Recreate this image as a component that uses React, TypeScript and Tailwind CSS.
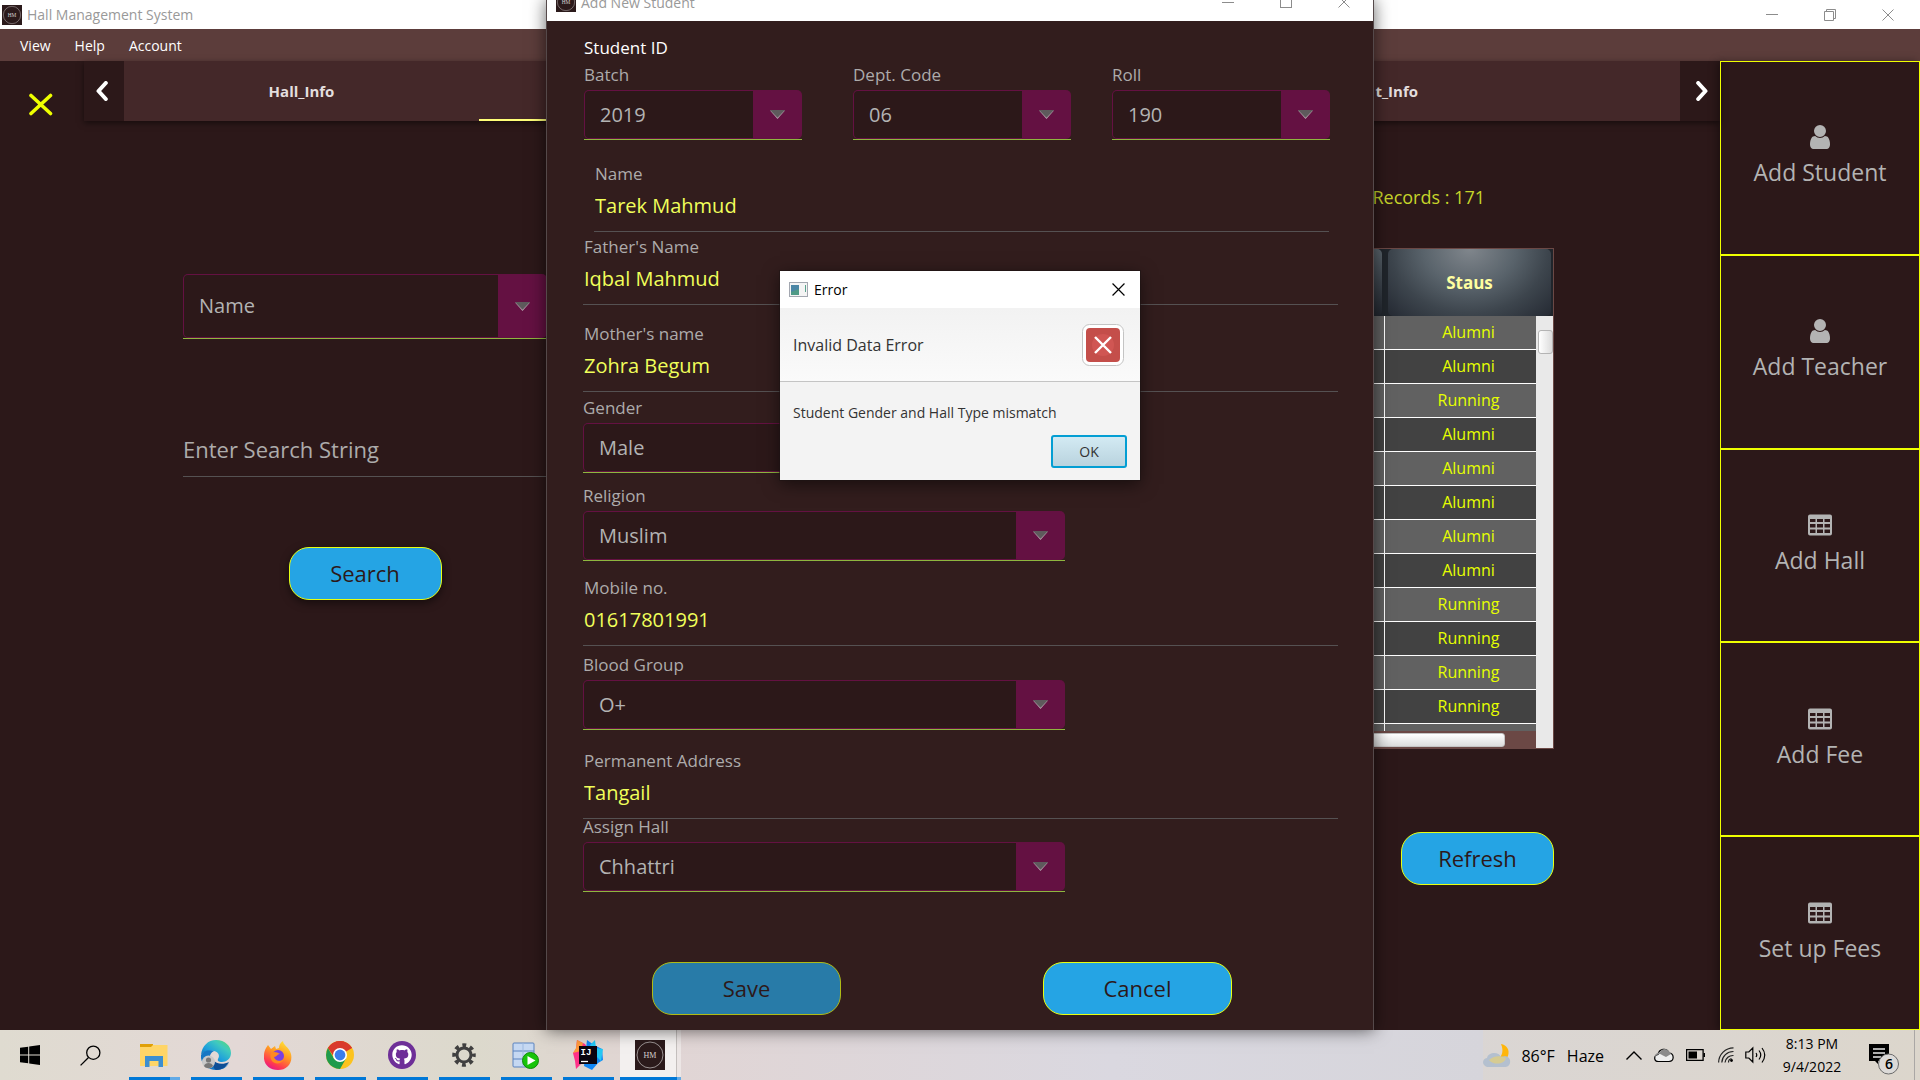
import type { ReactNode } from "react";
import { FaGithub } from "react-icons/fa";

/* ---------- shared icons ---------- */

function HallLogo({ className }: { className: string }) {
  return (
    <svg viewBox="0 0 30 30" className={className} aria-hidden="true">
      <rect width="30" height="30" fill="#2b1a1b" />
      <circle cx="15" cy="15" r="13" fill="none" stroke="#b5aeae" strokeWidth="0.8" />
      <text x="15" y="18" fontSize="8" textAnchor="middle" fill="#d6d0d0" fontFamily="Liberation Serif, serif">
        HM
      </text>
    </svg>
  );
}

function CrossIcon({ className, width = 1 }: { className: string; width?: number }) {
  return (
    <svg viewBox="0 0 12 12" className={className} aria-hidden="true">
      <path d="M.5 .5l11 11M11.5 .5l-11 11" stroke="currentColor" strokeWidth={width} fill="none" />
    </svg>
  );
}

function UserIcon() {
  return (
    <svg viewBox="256 128 1280 1536" className="h-6 w-5" fill="#b3b3b3" aria-hidden="true">
      <path d="M1536 1399q0 109-62.5 187t-150.5 78h-854q-88 0-150.5-78t-62.5-187q0-85 8.5-160.5t31.5-152 58.5-131 94-89 134.5-34.5q131 128 313 128t313-128q76 0 134.5 34.5t94 89 58.5 131 31.5 152 8.5 160.5zm-256-887q0 159-112.5 271.5t-271.5 112.5-271.5-112.5-112.5-271.5 112.5-271.5 271.5-112.5 271.5 112.5 112.5 271.5z" />
    </svg>
  );
}

function TableIcon() {
  return (
    <svg viewBox="0 0 24 21" className="h-6 w-6" aria-hidden="true">
      <path
        fillRule="evenodd"
        fill="#b3b3b3"
        d="M2 0h20a2 2 0 0 1 2 2v17a2 2 0 0 1-2 2H2a2 2 0 0 1-2-2V2a2 2 0 0 1 2-2zM2 4.500v3h5.500v-3zM9 4.500v3h6v-3zM16.500 4.500v3H22v-3zM2 9.500v3.500h5.500V9.500zM9 9.500v3.500h6V9.500zM16.500 9.500v3.500H22V9.500zM2 15v3.500h5.500V15zM9 15v3.500h6V15zM16.500 15v3.500H22V15z"
      />
    </svg>
  );
}

function Chevron({ flip = false }: { flip?: boolean }) {
  return (
    <svg viewBox="0 0 12 20" className={flip ? "h-5 w-3 rotate-180" : "h-5 w-3"} aria-hidden="true">
      <path d="M9.800 2L2.500 10l7.300 8" stroke="#fff" strokeWidth="4" strokeLinecap="round" strokeLinejoin="round" fill="none" />
    </svg>
  );
}

/* ---------- form controls ---------- */

function Combo({ id, value, label, className }: { id: string; value: string; label?: string; className: string }) {
  return (
    <div className={`flex border-b border-[#8fb63f] ${className}`}>
      <div className="flex flex-1 rounded-[5px] bg-[#641142] p-px">
        <select
          id={id}
          aria-label={label}
          defaultValue={value}
          className="min-w-0 flex-1 appearance-none rounded-l-[4px] bg-[#2c1819] pl-[15px] text-[20px] text-[#b3b3b3] outline-none"
        >
          <option>{value}</option>
        </select>
        <span className="pointer-events-none flex w-[48px] items-center justify-center">
          <svg viewBox="0 0 15 9" className="h-[9px] w-[15px]" aria-hidden="true">
            <path d="M0 .5h15L7.500 9z" fill="#b9a5b0" />
            <path d="M0 0h15L7.500 7.800z" fill="#5e5a5c" />
          </svg>
        </span>
      </div>
    </div>
  );
}

function SelectField({ id, label, value, width, className }: { id: string; label: string; value: string; width: string; className?: string }) {
  return (
    <div className={`flex flex-col gap-[3px] ${width} ${className ?? ""}`}>
      <label htmlFor={id} className="text-[17px] leading-6 text-[#adabab]">
        {label}
      </label>
      <Combo id={id} value={value} className="h-[50px]" />
    </div>
  );
}

function TextField({ id, label, value, className }: { id: string; label: string; value: string; className: string }) {
  return (
    <div className={`flex flex-col ${className}`}>
      <label htmlFor={id} className="pl-px text-[17px] leading-6 text-[#adabab]">
        {label}
      </label>
      <input
        id={id}
        defaultValue={value}
        className="h-[46px] border-b border-[#555152] bg-transparent pb-[6px] pl-px text-[20px] text-[#f0ff5a] outline-none"
      />
    </div>
  );
}

function PillButton({ children, className }: { children: ReactNode; className: string }) {
  return (
    <button
      type="button"
      className={`h-[53px] rounded-[20px] border border-[#e6ff14] bg-[#25a4e4] pb-px text-[22px] text-[#2c1819] ${className}`}
    >
      {children}
    </button>
  );
}

/* ---------- main window ---------- */

const statuses = [
  "Alumni", "Alumni", "Running", "Alumni", "Alumni", "Alumni",
  "Alumni", "Alumni", "Running", "Running", "Running", "Running",
];

function StatusTable() {
  return (
    <div className="border border-[#6b4845]">
      <table className="w-full table-fixed border-separate border-spacing-0">
        <colgroup>
          <col />
          <col className="w-[151px]" />
          <col className="w-[17px]" />
        </colgroup>
        <thead>
          <tr className="h-[67px] bg-[#20252b]">
            <th className="p-0 pr-[3px]">
              <div className="h-[67px] rounded-[5px] bg-linear-to-b from-[#5a646c] to-[#22272f]" />
            </th>
            <th colSpan={2} className="p-0 pl-[3px] pr-[2px]">
              <div className="flex h-[67px] items-center justify-center rounded-[5px] bg-[radial-gradient(ellipse_at_50%_0%,#80868c_0%,#59636b_40%,#3d454d_68%,#252a33_100%)] text-[17px] font-bold text-[#ffffa0]">
                Staus
              </div>
            </th>
          </tr>
        </thead>
        <tbody>
          {statuses.map((status, i) => (
            <tr key={i} className={i % 2 === 0 ? "h-[34px] bg-[#616161]" : "h-[34px] bg-[#424242]"}>
              <td className="border-r border-b border-white p-0" />
              <td className="border-b border-white p-0 pb-[2px] pl-4 text-center text-[16px] leading-6 text-[#e6ff00]">
                {status}
              </td>
              {i === 0 && (
                <td rowSpan={14} className="bg-[#e9e9e9] p-0 align-top">
                  <div className="ml-[2px] mt-[14px] h-6 rounded-[3px] border border-[#b4b4b4] bg-linear-to-r from-white to-[#dcdcdc]" />
                </td>
              )}
            </tr>
          ))}
          <tr className="h-[7px] bg-[#616161]">
            <td className="border-r border-white p-0" />
            <td className="p-0" />
          </tr>
          <tr className="h-[17px] bg-[#6b4845]">
            <td colSpan={2} className="p-0">
              <div className="mr-[31px] h-[14px] rounded-[3px] border border-[#c4c4c4] bg-linear-to-b from-white to-[#dcdcdc]" />
            </td>
          </tr>
        </tbody>
      </table>
    </div>
  );
}

const actions = [
  { label: "Add Student", icon: "user" },
  { label: "Add Teacher", icon: "user" },
  { label: "Add Hall", icon: "table" },
  { label: "Add Fee", icon: "table" },
  { label: "Set up Fees", icon: "table" },
];

function MainWindow() {
  return (
    <div className="flex flex-1 flex-col">
      <header className="flex h-[29px] items-center bg-white">
        <HallLogo className="ml-[2px] h-5 w-5" />
        <span className="ml-[5px] flex-1 text-[14px] text-[#999]">Hall Management System</span>
        <div className="flex items-center gap-[46px] pr-[26px] text-[#8c8c8c]">
          <button type="button" aria-label="Minimize" className="flex h-3 w-3 items-center">
            <span className="h-px w-3 bg-[#8c8c8c]" />
          </button>
          <button type="button" aria-label="Restore">
            <svg viewBox="0 0 12 12" className="h-3 w-3" fill="none" stroke="currentColor" aria-hidden="true">
              <path d="M.5 2.500h9v9h-9zM2.500 2.500v-2h9v9h-2" />
            </svg>
          </button>
          <button type="button" aria-label="Close">
            <CrossIcon className="h-3 w-3" />
          </button>
        </div>
      </header>
      <nav className="flex h-8 items-center gap-6 bg-[#5c3d3b] pl-5 text-[14px] text-white">
        <button type="button">View</button>
        <button type="button">Help</button>
        <button type="button">Account</button>
      </nav>
      <div className="flex flex-1 bg-[#2c1819]">
        <div className="w-[84px] pt-8 pl-[28px]">
          <button type="button" aria-label="Close menu" className="block">
            <svg viewBox="0 0 26 24" className="h-6 w-[26px]" aria-hidden="true">
              <path d="M3 2.500l19.500 18M22.500 2.500L3 20.500" stroke="#efff00" strokeWidth="3.600" strokeLinecap="round" />
            </svg>
          </button>
        </div>
        <main className="flex min-w-0 flex-1 flex-col">
          <div className="flex h-[60px] shadow-[0_2px_6px_rgba(0,0,0,0.5)]">
            <button type="button" aria-label="Previous tab" className="flex w-10 items-center pl-3">
              <Chevron />
            </button>
            <div className="flex flex-1 bg-[#442829] text-[15px] font-bold text-[#e3dede]">
              <button type="button" className="w-[355px]">
                Hall_Info
              </button>
              <button type="button" aria-label="Current tab" className="w-[355px] border-b-2 border-[#ffff78]" />
              <span className="flex-1" />
              <button type="button" className="w-[308px] pr-[262px] text-right">
                t_Info
              </button>
            </div>
            <button type="button" aria-label="Next tab" className="flex w-10 items-center pl-4">
              <Chevron flip />
            </button>
          </div>
          <div className="flex flex-1 justify-between pr-[166px] pl-[99px]">
            <form className="flex w-[364px] flex-col pt-[153px]">
              <Combo id="search-by" value="Name" label="Search by" className="h-[65px]" />
              <input
                aria-label="Enter Search String"
                placeholder="Enter Search String"
                className="mt-[86px] h-[52px] border-b border-[#555152] bg-transparent pb-1 text-[22px] text-white outline-none placeholder:text-[#adabab]"
              />
              <PillButton className="mt-[70px] w-[153px] self-center shadow-[0_3px_8px_rgba(0,0,0,0.5)]">Search</PillButton>
            </form>
            <section className="flex w-[400px] flex-col pt-[64px]">
              <p className="mr-[69px] self-end font-['Comic_Sans_MS','Open_Sans',sans-serif] text-[18px] leading-6 text-[#c6d42a]">Records : 171</p>
              <div className="mt-[39px]">
                <StatusTable />
              </div>
              <PillButton className="mt-[83px] w-[153px] self-end">Refresh</PillButton>
            </section>
          </div>
        </main>
        <aside className="flex w-[200px] flex-col overflow-hidden shadow-[-3px_0_8px_rgba(0,0,0,0.35)]">
          {actions.map((a) => (
            <button
              key={a.label}
              type="button"
              className="flex flex-1 flex-col items-center justify-center gap-[7px] border border-[#efff00] pb-[2px] text-[23px] leading-8 text-[#b3b3b3]"
            >
              {a.icon === "user" ? <UserIcon /> : <TableIcon />}
              {a.label}
            </button>
          ))}
        </aside>
      </div>
    </div>
  );
}

/* ---------- add student window ---------- */

function StudentWindow() {
  return (
    <div className="absolute inset-x-0 top-0 bottom-[50px] mx-auto flex w-[828px] flex-col overflow-hidden border-x border-[#55494a] bg-[#321d1d] shadow-[0_0_16px_rgba(0,0,0,0.6)]">
      <header className="flex h-[21px] items-end bg-white">
        <HallLogo className="mb-[9px] ml-[9px] h-5 w-5 shrink-0" />
        <span className="mb-2 ml-[5px] flex-1 text-[14px] leading-5 text-[#999]">Add New Student</span>
        <div className="mb-[13px] flex items-center gap-[46px] pr-[23px] text-[#8c8c8c]">
          <button type="button" aria-label="Minimize" className="flex h-3 w-3 items-center">
            <span className="h-px w-3 bg-[#8c8c8c]" />
          </button>
          <button type="button" aria-label="Maximize" className="h-3 w-3 border border-[#8c8c8c]" />
          <button type="button" aria-label="Close">
            <CrossIcon className="h-3 w-3" />
          </button>
        </div>
      </header>
      <form className="flex flex-col pt-[15px] pr-[35px] pl-[36px]">
        <h2 className="pl-px text-[17px] leading-6 text-white">Student ID</h2>
        <div className="mt-[3px] flex pl-px">
          <SelectField id="batch" label="Batch" value="2019" width="w-[218px]" />
          <SelectField id="dept" label="Dept. Code" value="06" width="w-[218px]" className="ml-[51px]" />
          <SelectField id="roll" label="Roll" value="190" width="w-[218px]" className="ml-[41px]" />
        </div>
        <TextField id="name" label="Name" value="Tarek Mahmud" className="mt-[22px] mr-[9px] ml-[11px]" />
        <TextField id="father" label="Father's Name" value="Iqbal Mahmud" className="mt-[3px]" />
        <TextField id="mother" label="Mother's name" value="Zohra Begum" className="mt-[17px]" />
        <SelectField id="gender" label="Gender" value="Male" width="w-[482px]" className="mt-1" />
        <SelectField id="religion" label="Religion" value="Muslim" width="w-[482px]" className="mt-[11px]" />
        <TextField id="mobile" label="Mobile no." value="01617801991" className="mt-[15px]" />
        <SelectField id="blood" label="Blood Group" value="O+" width="w-[482px]" className="mt-[7px]" />
        <TextField id="address" label="Permanent Address" value="Tangail" className="mt-[19px]" />
        <SelectField id="hall" label="Assign Hall" value="Chhattri" width="w-[482px]" className="-mt-1" />
        <div className="mt-[70px] flex justify-between pr-[106px] pl-[69px]">
          <PillButton className="w-[189px] opacity-70">Save</PillButton>
          <PillButton className="w-[189px]">Cancel</PillButton>
        </div>
      </form>
    </div>
  );
}

function ErrorDialog() {
  return (
    <div
      role="alertdialog"
      aria-label="Error"
      className="absolute inset-x-0 top-[271px] mx-auto w-[360px] bg-[#f3f3f3] shadow-[0_0_0_1px_rgba(30,20,20,0.6),0_4px_16px_rgba(0,0,0,0.55)]"
    >
      <header className="flex h-[37px] items-center bg-white pr-[15px] pl-[9px]">
        <svg viewBox="0 0 19 16" className="h-4 w-[19px]" aria-hidden="true">
          <rect x=".5" y=".5" width="18" height="14" fill="#f4f4f4" stroke="#a3a7b0" />
          <rect x="2" y="3" width="8" height="10" fill="#4f9a86" />
          <path d="M2 3h8v4l-8 3z" fill="#4b86a5" />
          <path d="M16.500 3v7" stroke="#5aa38d" />
        </svg>
        <span className="ml-[6px] flex-1 text-[14px] text-black">Error</span>
        <button type="button" aria-label="Close dialog" className="text-black">
          <CrossIcon className="h-[13px] w-[13px]" width={1.1} />
        </button>
      </header>
      <div className="flex h-[74px] items-center justify-between border-b border-[#c4c4c4] bg-linear-to-b from-[#f2f2f2] to-[#fafafa] pr-4 pl-[13px]">
        <h3 className="text-[16px] text-[#333]">Invalid Data Error</h3>
        <svg viewBox="0 0 42 42" className="h-[42px] w-[42px]" aria-hidden="true">
          <rect x=".5" y=".5" width="41" height="41" rx="7" fill="#fff" stroke="#c4c4c4" />
          <rect x="4" y="4" width="34" height="34" rx="4" fill="#c44e4a" />
          <circle cx="21" cy="21" r="11" fill="#d05653" />
          <path d="M13 13l16 16M29 13L13 29" stroke="#fff" strokeWidth="2.400" />
        </svg>
      </div>
      <div className="flex flex-col px-[13px] pt-[21px] pb-3">
        <p className="text-[14px] leading-5 text-[#333]">Student Gender and Hall Type mismatch</p>
        <button
          type="button"
          className="mt-[12px] h-[33px] w-[76px] self-end rounded-[3px] border-2 border-[#039ed3] bg-linear-to-b from-[#d3eaf3] to-[#b9d3de] text-[14px] text-[#333]"
        >
          OK
        </button>
      </div>
    </div>
  );
}

/* ---------- taskbar ---------- */

function FolderIcon() {
  return (
    <svg viewBox="0 0 28 24" className="h-6 w-7" aria-hidden="true">
      <path d="M0 1h13v4H0z" fill="#e0a008" />
      <path d="M0 4h11l2-2h14.500v21H0z" fill="#ffd567" />
      <path d="M5 24V13h18v11h-4.500v-6h-9v6z" fill="#3d8fd1" />
    </svg>
  );
}

function EdgeIcon() {
  return (
    <svg viewBox="0 0 30 30" className="h-[30px] w-[30px]" aria-hidden="true">
      <defs>
        <linearGradient id="edge-fill" x1="0" y1="1" x2="1" y2="0">
          <stop offset="0" stopColor="#0b5aa5" />
          <stop offset="0.4" stopColor="#1e9fdc" />
          <stop offset="0.7" stopColor="#3fc9c0" />
          <stop offset="1" stopColor="#5bdc66" />
        </linearGradient>
      </defs>
      <path d="M0 15C1 6 7 0 15 0c9 0 15 6 15 13 0 6-5 9-9 9-3 0-5-1-4-3 2-3 1-7-4-8C8 10 2 12 0 15z" fill="url(#edge-fill)" />
      <path d="M0 15c2-4 8-6 13-4-4 2-5 6-4 10 1 5 7 8 12 7 3-1 5-3 7-5-3 5-7 7-13 7C6 30-1 23 0 15z" fill="#1577c4" />
      <path d="M12 20c3 4 10 5 16 2-3 5-7 8-13 8-3-2-4-6-3-10z" fill="#0d4e96" />
      <circle cx="7.500" cy="22" r="6.500" fill="#c9c9c9" />
      <circle cx="7.500" cy="20" r="2.600" fill="#777" />
      <path d="M3 26c1-4 8-4 9 0-2 3-7 3-9 0z" fill="#777" />
    </svg>
  );
}

function FirefoxIcon() {
  return (
    <svg viewBox="0 0 28 29" className="h-[29px] w-7" aria-hidden="true">
      <defs>
        <linearGradient id="fox" x1="0.8" y1="0" x2="0.3" y2="1">
          <stop offset="0" stopColor="#ffe739" />
          <stop offset="0.45" stopColor="#ff9722" />
          <stop offset="0.8" stopColor="#ff3b4f" />
          <stop offset="1" stopColor="#e6178a" />
        </linearGradient>
      </defs>
      <path d="M2 7l2-3 3 4 4-3 1 3 3-1c0-3 1-5 4-7 0 4 6 6 8 13 2 9-4 16-13 16S-1 23 0 14c0-3 1-5 2-7z" fill="url(#fox)" />
      <circle cx="14" cy="15" r="6" fill="#7a3fe0" />
      <path d="M7 12c3-2 6-1 9 1-3 0-3 3-6 3 1 4 6 5 10 2-2 5-9 6-12 2-2-3-2-6-1-8z" fill="#ff8a20" />
    </svg>
  );
}

function ChromeIcon() {
  return (
    <svg viewBox="0 0 28 28" className="h-7 w-7" aria-hidden="true">
      <circle cx="14" cy="14" r="14" fill="#fcc31e" />
      <path d="M14 14L1.900 7A14 14 0 0 1 26.100 7z" fill="#d93a2d" />
      <path d="M14 7h12.100A14 14 0 0 0 1.900 7l5.500 8z" fill="#d93a2d" />
      <path d="M1.900 7A14 14 0 0 0 14 28l6-10.500-12 0z" fill="#1f9a4c" />
      <circle cx="14" cy="14" r="7" fill="#fff" />
      <circle cx="14" cy="14" r="5.400" fill="#3b7ded" />
    </svg>
  );
}

function GithubIcon() {
  return (
    <span className="flex h-7 w-7 items-center justify-center rounded-full bg-[#6e2f98]">
      <FaGithub className="h-5 w-5 text-white" />
    </span>
  );
}

function GearIcon() {
  return (
    <svg viewBox="0 0 24 24" className="h-6 w-6" aria-hidden="true">
      <circle cx="12" cy="12" r="9.500" fill="none" stroke="#404040" strokeWidth="4.500" strokeDasharray="3.700 3.760" strokeDashoffset="1.850" />
      <circle cx="12" cy="12" r="7" fill="none" stroke="#404040" strokeWidth="3" />
    </svg>
  );
}

function DatabaseIcon() {
  return (
    <svg viewBox="0 0 27 27" className="h-[27px] w-[27px]" aria-hidden="true">
      <rect x="1" y="1" width="21" height="24" rx="1" fill="#c5d8f2" stroke="#5b83bf" />
      <path d="M1 9h21M1 17h21" stroke="#5b83bf" />
      <path d="M11 1v24" stroke="#9db9e0" />
      <circle cx="18.500" cy="18.500" r="8" fill="#17c40a" stroke="#0f8a08" />
      <path d="M15.500 14l8 4.500-8 4.500z" fill="#fff" />
    </svg>
  );
}

function IntellijIcon() {
  return (
    <svg viewBox="0 0 30 30" className="h-[30px] w-[30px]" aria-hidden="true">
      <path d="M4 0l8 4 4 6-8 14-5 5-1-8-2-8 3-4z" fill="#ff3188" />
      <path d="M4 0l6 3-2 8-8 2 3-5z" fill="#ff9a3d" />
      <path d="M14 0l7 5 8 4 1 11-5 3-6 7-8-4z" fill="#1186f5" />
      <path d="M22 0l1 8 7 1-2 12-6-6-5-10z" fill="#23c8f4" />
      <rect x="6" y="6" width="18" height="18" fill="#0b0510" />
      <text x="7.500" y="15" fontSize="9" fontWeight="bold" fill="#fff" fontFamily="Liberation Mono, monospace">
        IJ
      </text>
      <path d="M8 21.500h7" stroke="#fff" strokeWidth="1.300" />
    </svg>
  );
}

const apps = [
  { name: "File Explorer", icon: <FolderIcon />, extra: true },
  { name: "Edge", icon: <EdgeIcon />, extra: false },
  { name: "Firefox", icon: <FirefoxIcon />, extra: false },
  { name: "Chrome", icon: <ChromeIcon />, extra: false },
  { name: "GitHub", icon: <GithubIcon />, extra: false },
  { name: "Settings", icon: <GearIcon />, extra: false },
  { name: "Database", icon: <DatabaseIcon />, extra: false },
  { name: "IntelliJ IDEA", icon: <IntellijIcon />, extra: false },
];

function Taskbar() {
  return (
    <footer className="flex h-[50px] bg-linear-to-r from-[#dedad1] via-[#d8d5dc] to-[#dcd6cc]">
      <div className="flex flex-1 bg-[linear-gradient(90deg,#dfdbd0_0%,#e3d8d6_16%,#dcd9cc_32%,#e1d5d4_44%,#dad8e0_75%,#d6d5db_100%)]">
        <button type="button" aria-label="Start" className="flex w-[60px] items-center justify-center">
          <svg viewBox="0 0 20 20" className="h-5 w-5" aria-hidden="true">
            <path d="M0 2.800L8.200 1.700v7.800H0zM9.200 1.500L20 0v9.500H9.200zM0 10.500h8.200v7.800L0 17.200zM9.200 10.500H20V20L9.200 18.500z" />
          </svg>
        </button>
        <button type="button" aria-label="Search Windows" className="flex w-[60px] items-center justify-center">
          <svg viewBox="0 0 21 21" className="h-[21px] w-[21px]" fill="none" stroke="#000" strokeWidth="1.300" aria-hidden="true">
            <circle cx="13.300" cy="7.700" r="6.600" />
            <path d="M8.500 12.500L.6 20.400" />
          </svg>
        </button>
        {apps.map((app) => (
          <button key={app.name} type="button" aria-label={app.name} className="flex w-[62px] flex-col pl-[9px]">
            <span className="flex w-[49px] flex-1 items-center justify-center pt-[3px]">{app.icon}</span>
            <span className="flex h-[3px]">
              <span className={app.extra ? "w-[41px] bg-[#0078d7]" : "w-[51px] bg-[#0078d7]"} />
              {app.extra && <span className="w-[10px] bg-[#62aae6]" />}
            </span>
          </button>
        ))}
        <button type="button" aria-label="Hall Management System" className="ml-[4px] flex w-[61px] flex-col bg-[#ece6e5]">
          <span className="flex w-[57px] flex-1 items-center justify-center border-r border-[#c4bfbd] bg-[#f3f0ef] pl-[3px] pt-[3px]">
            <HallLogo className="h-[30px] w-[30px]" />
          </span>
          <span className="flex h-[3px]">
            <span className="w-[57px] bg-[#0078d7]" />
            <span className="w-1 bg-[#62aae6]" />
          </span>
        </button>
      </div>
      <div className="flex items-center text-black">
        <button type="button" className="flex items-center pt-[2px] text-[16px]">
          <svg viewBox="0 0 28 26" className="h-[26px] w-7" aria-hidden="true">
            <path d="M18 1c6 1 9 6 7 12-2 4-6 5-10 4 4-4 6-9 3-16z" fill="#ffb60a" />
            <path d="M6 24c-7 0-8-8-2-9 1-6 12-7 14-1 6-2 10 1 9 6-1 4-4 4-6 4z" fill="#b4c0cf" />
            <path d="M6 17c4-4 11-5 17-2-1 6-12 8-17 2z" fill="#d6cb92" />
          </svg>
          <span className="ml-[10px]">86°F</span>
          <span className="ml-[12px]">Haze</span>
        </button>
        <div className="ml-[22px] flex items-center">
          <svg viewBox="0 0 16 9" className="h-[9px] w-4" fill="none" stroke="#000" strokeWidth="1.400" aria-hidden="true">
            <path d="M.5 8.500L8 1l7.500 7.500" />
          </svg>
          <svg viewBox="0 0 20 15" className="ml-[12px] h-[15px] w-5" aria-hidden="true">
            <path d="M4.500 13.500c-5 0-5-6-.5-7C5 1 12.500-1 15 5c5 0 6 8 0 8.500z" fill="#eee" stroke="#000" strokeWidth="1.200" />
            <path d="M1.500 10C2 6 6 5 8 7l4 2 5-3C14 1 9-1 6 4 3 5 0 6 1.500 10z" fill="#8b8b8b" />
          </svg>
          <svg viewBox="0 0 19 12" className="ml-[12px] h-3 w-[19px]" aria-hidden="true">
            <path d="M.6.600h16.500v10.800H.6zM18.500 4v4" fill="none" stroke="#000" strokeWidth="1.300" />
            <path d="M2.500 2.500h8.500v7H2.500z" />
          </svg>
          <svg viewBox="0 0 16 16" className="ml-[13px] h-4 w-4" fill="none" stroke="#222" strokeWidth="1.200" aria-hidden="true">
            <path d="M.6 15.500A15 15 0 0 1 15.500 .8M3.800 15.500A11.500 11.500 0 0 1 15.500 4.500M7 15.500a8 8 0 0 1 8.500-7" />
            <circle cx="13.500" cy="13.500" r="1.400" fill="#000" stroke="none" />
            <path d="M10.500 15.500a4 4 0 0 1 3-4" />
          </svg>
          <svg viewBox="0 0 21 18" className="ml-[11px] h-[18px] w-[21px]" fill="none" stroke="#000" strokeWidth="1.200" aria-hidden="true">
            <path d="M.8 6h3l4-4v14l-4-4h-3zM11 7q1.500 2 0 4M14 4.500q3.500 4.500 0 9M17 2q5.500 7 0 14.500" />
          </svg>
        </div>
        <div className="ml-[15px] flex w-[62px] flex-col text-center text-[14px] leading-[23px]">
          <span>8:13 PM</span>
          <span>9/4/2022</span>
        </div>
        <button type="button" aria-label="Notifications" className="relative ml-[26px] mt-[8px] h-[30px] w-[30px]">
          <svg viewBox="0 0 30 31" className="h-[31px] w-[30px]" aria-hidden="true">
            <path d="M0 0h20v17H9v3l-3-3H0z" />
            <path d="M4 5h12M4 9h12M4 13h8" stroke="#e6e6e6" strokeWidth="1.300" />
            <circle cx="19.500" cy="20" r="10" fill="#dcdad8" stroke="#6b6b6b" />
          </svg>
          <span className="absolute top-[10px] left-[10px] w-5 text-center text-[14px] leading-5 font-semibold">6</span>
        </button>
        <span className="ml-[15px] h-[50px] w-[6px] border-l border-[#aaa7a5]" />
      </div>
    </footer>
  );
}

export default function App() {
  return (
    <div className="relative flex min-h-screen flex-col overflow-hidden bg-[#2c1819] font-['Open_Sans',sans-serif]">
      <MainWindow />
      <StudentWindow />
      <ErrorDialog />
      <Taskbar />
    </div>
  );
}
